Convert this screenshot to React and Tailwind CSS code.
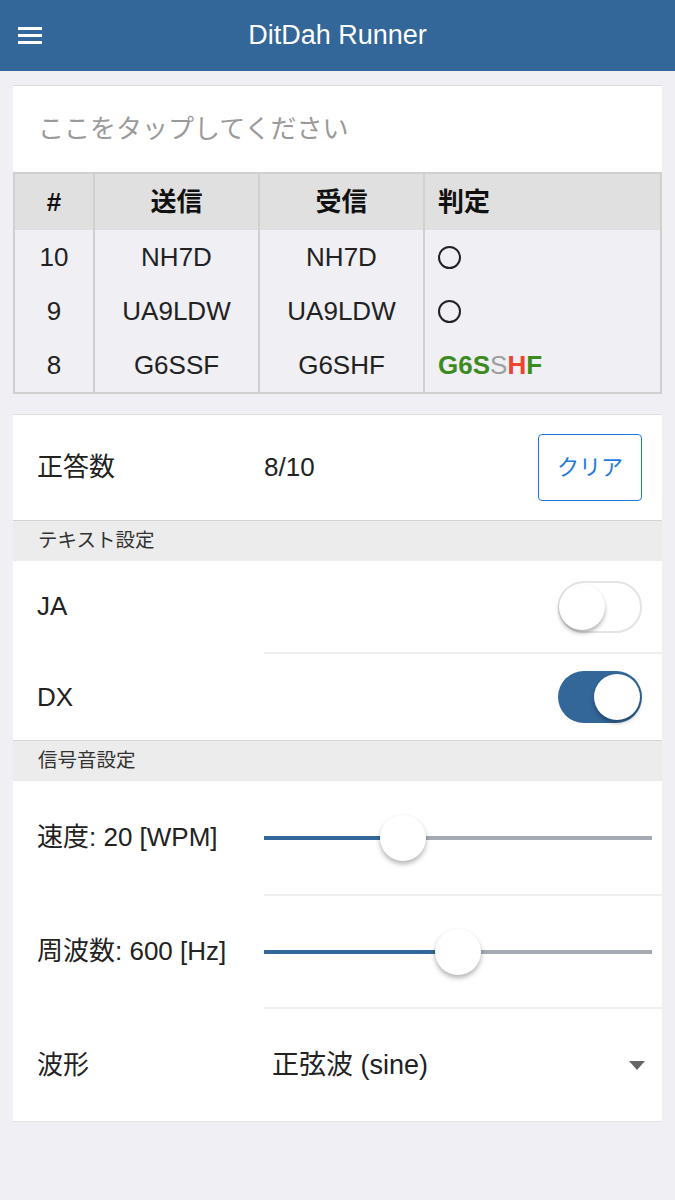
import React, { useState } from "react";

const font = { fontFamily: "'Liberation Sans', 'Noto Sans CJK JP', sans-serif" };

const history = [
  { no: 10, sent: "NH7D", recv: "NH7D", ok: true },
  { no: 9, sent: "UA9LDW", recv: "UA9LDW", ok: true },
  { no: 8, sent: "G6SSF", recv: "G6SHF", ok: false },
];

// per-letter marks for a wrong answer
const diff = [
  { ch: "G", cls: "text-[#3c8b1f]" },
  { ch: "6", cls: "text-[#3c8b1f]" },
  { ch: "S", cls: "text-[#3c8b1f]" },
  { ch: "S", cls: "text-[#9e9e9e] font-normal" },
  { ch: "H", cls: "text-[#f0422f]" },
  { ch: "F", cls: "text-[#3c8b1f]" },
];

function Toggle({ on, onChange }) {
  return (
    <button
      onClick={onChange}
      className={`relative h-[52px] w-[84px] rounded-full ${on ? "bg-[#336699]" : "bg-white border-2 border-[#e4e4e4]"}`}
    >
      <span
        className={`absolute top-1/2 -translate-y-1/2 h-[46px] w-[46px] rounded-full bg-white shadow-[0_3px_4px_rgba(0,0,0,0.3)] ${on ? "right-[2px]" : "-left-[1px]"}`}
      />
    </button>
  );
}

function Slider({ pct }) {
  return (
    <div className="relative h-[46px] flex-1 mr-[10px] flex items-center">
      <div className="h-[4px] w-full bg-[#a4a9b2]">
        <div className="h-full bg-[#336699]" style={{ width: `${pct}%` }} />
      </div>
      <span
        className="absolute top-0 h-[46px] w-[46px] -translate-x-1/2 rounded-full bg-white shadow-[0_3px_5px_rgba(0,0,0,0.3)]"
        style={{ left: `${pct}%` }}
      />
    </div>
  );
}

function SectionHead({ children }) {
  return <div className="h-[41px] border-t border-[#d4d4d4] bg-[#ececec] pl-[25px] flex items-center text-[19.5px] text-[#333]">{children}</div>;
}

export default function App() {
  const [ja, setJa] = useState(false);
  const [dx, setDx] = useState(true);

  return (
    <div style={font} className="min-h-[1200px] bg-[#efeff4] text-[#222]">
      <header className="h-[71px] bg-[#336699] grid grid-cols-[60px_1fr_60px] items-center text-white">
        <div className="pl-[18px] flex flex-col gap-[4px]">
          <span className="block h-[3px] w-[24px] bg-white" />
          <span className="block h-[3px] w-[24px] bg-white" />
          <span className="block h-[3px] w-[24px] bg-white" />
        </div>
        <h1 className="text-center text-[27px]">DitDah Runner</h1>
        <div />
      </header>

      <main className="px-[13px] pt-[14px]">
        <section className="bg-white border-t border-[#dcdcdc]">
          <div className="h-[86px] pl-[25px] flex items-center text-[26px] text-[#9a9a9a]">ここをタップしてください</div>
          <div className="border-2 border-[#d0d0d0] text-[26px]">
            <div className="grid grid-cols-[80px_165px_165px_1fr] h-[56px] bg-[#e0e0e0] font-bold text-[#111]">
              <div className="flex items-center justify-center border-r-2 border-[#d0d0d0]">#</div>
              <div className="flex items-center justify-center border-r-2 border-[#d0d0d0]">送信</div>
              <div className="flex items-center justify-center border-r-2 border-[#d0d0d0]">受信</div>
              <div className="flex items-center pl-[13px]">判定</div>
            </div>
            {history.map((r) => (
              <div key={r.no} className="grid grid-cols-[80px_165px_165px_1fr] h-[54px] bg-[#efeff4]">
                <div className="flex items-center justify-center border-r-2 border-[#d0d0d0]">{r.no}</div>
                <div className="flex items-center justify-center border-r-2 border-[#d0d0d0]">{r.sent}</div>
                <div className="flex items-center justify-center border-r-2 border-[#d0d0d0]">{r.recv}</div>
                <div className="flex items-center pl-[13px]">
                  {r.ok ? (
                    <span className="block h-[23px] w-[23px] rounded-full border-2 border-[#222]" />
                  ) : (
                    <span className="font-bold">
                      {diff.map((d, i) => (
                        <span key={i} className={d.cls}>{d.ch}</span>
                      ))}
                    </span>
                  )}
                </div>
              </div>
            ))}
          </div>
        </section>

        <section className="mt-[20px] bg-white border-t border-[#dcdcdc] border-b border-b-[#e2e2e2] text-[26px]">
          <div className="h-[105px] flex items-center">
            <div className="w-[251px] pl-[24px]">正答数</div>
            <div className="flex-1">8/10</div>
            <button className="mr-[20px] h-[67px] w-[104px] rounded-[4px] border-[1.5px] border-[#1f7ae0] text-[#1f7ae0] text-[22px]">クリア</button>
          </div>

          <SectionHead>テキスト設定</SectionHead>
          <div className="h-[91px] flex items-center justify-between pl-[24px] pr-[20px]">
            <span>JA</span>
            <Toggle on={ja} onChange={() => setJa(!ja)} />
          </div>
          <div className="ml-[251px] border-t-2 border-[#efefef]" />
          <div className="h-[86px] flex items-center justify-between pl-[24px] pr-[20px]">
            <span>DX</span>
            <Toggle on={dx} onChange={() => setDx(!dx)} />
          </div>

          <SectionHead>信号音設定</SectionHead>
          <div className="h-[113px] flex items-center">
            <div className="w-[251px] pl-[24px]">速度: 20 [WPM]</div>
            <Slider pct={35.8} />
          </div>
          <div className="ml-[251px] border-t-2 border-[#efefef]" />
          <div className="h-[111px] flex items-center">
            <div className="w-[251px] pl-[24px]">周波数: 600 [Hz]</div>
            <Slider pct={50} />
          </div>
          <div className="ml-[251px] border-t-2 border-[#efefef]" />
          <div className="h-[112px] flex items-center">
            <div className="w-[251px] pl-[24px]">波形</div>
            <div className="flex-1 pl-[8px] text-[27px]">正弦波 (sine)</div>
            <svg width="16" height="9" viewBox="0 0 16 9" className="mr-[17px]">
              <path d="M0 0h16L8 9z" fill="#666" />
            </svg>
          </div>
        </section>
      </main>
    </div>
  );
}
